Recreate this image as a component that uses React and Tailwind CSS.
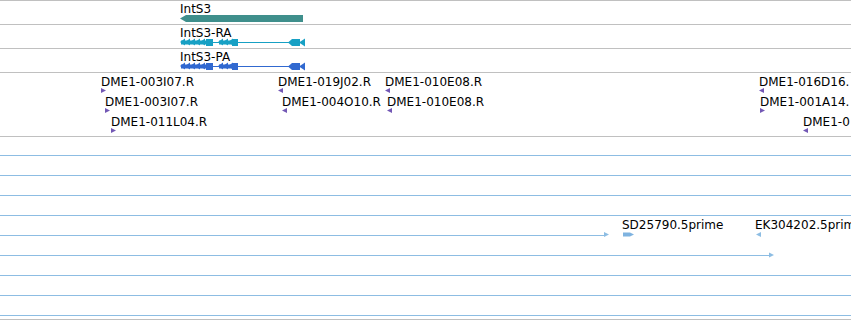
const TEAL = "#3f8f8c";
const CYAN = "#17a0c4";
const BLUE = "#3169d0";
const PURPLE = "#7358b5";
const EST = "#8dbde3";

function Label({ x, y, children }) {
  return (
    <div className="absolute whitespace-nowrap" style={{ left: x, top: y }}>
      {children}
    </div>
  );
}

// transcript glyph in track-local coordinates, centre line at y=17
function Transcript({ color }) {
  const tri = (x) => `${x},17 ${x + 5},13.5 ${x + 5},20.5`;
  return (
    <svg className="absolute left-0 top-0" width="851" height="23">
      <line x1="212" y1="17.5" x2="290" y2="17.5" stroke={color} strokeWidth="1" />
      <rect x="181" y="15.5" width="32" height="4" fill={color} />
      {[180, 185, 190, 195, 200].map((x) => (
        <polygon key={x} points={tri(x)} fill={color} />
      ))}
      <rect x="206" y="14" width="7" height="7" fill={color} />
      <rect x="219" y="15.5" width="19" height="4" fill={color} />
      {[218, 223, 228].map((x) => (
        <polygon key={x} points={tri(x)} fill={color} />
      ))}
      <rect x="232" y="14" width="6" height="7" fill={color} />
      <polygon points="288,17.5 292,14 300,14 300,21 292,21" fill={color} />
      <polygon points="299,17.5 305,13.5 305,21.5" fill={color} />
    </svg>
  );
}

const probes = [
  { x: 101, row: 0, name: "DME1-003I07.R", dir: "R" },
  { x: 278, row: 0, name: "DME1-019J02.R", dir: "L" },
  { x: 385, row: 0, name: "DME1-010E08.R", dir: "L" },
  { x: 759, row: 0, name: "DME1-016D16.", dir: "L" },
  { x: 105, row: 1, name: "DME1-003I07.R", dir: "R" },
  { x: 282, row: 1, name: "DME1-004O10.R", dir: "L" },
  { x: 387, row: 1, name: "DME1-010E08.R", dir: "L" },
  { x: 760, row: 1, name: "DME1-001A14.", dir: "R" },
  { x: 111, row: 2, name: "DME1-011L04.R", dir: "R" },
  { x: 803, row: 2, name: "DME1-0", dir: "L" },
];

function ProbeRow({ row }) {
  const items = probes.filter((p) => p.row === row);
  return (
    <div className="relative h-[20px]">
      {items.map((p, i) => (
        <Label key={i} x={p.x} y={2}>
          {p.name}
        </Label>
      ))}
      <svg className="absolute left-0 top-0 overflow-visible" width="851" height="20">
        {items.map((p, i) => {
          const pts =
            p.dir === "R"
              ? `${p.x},15 ${p.x + 5},17.5 ${p.x},20`
              : `${p.x + 5},15 ${p.x},17.5 ${p.x + 5},20`;
          return <polygon key={i} points={pts} fill={PURPLE} />;
        })}
      </svg>
    </div>
  );
}

function EstRow({ first, children, full = true }) {
  return (
    <div
      className={`relative ${first ? "h-[19px]" : "h-[20px]"} ${
        full ? "border-b border-[#8dbde3]" : ""
      }`}
    >
      {children}
    </div>
  );
}

function EstTrack() {
  return (
    <div className="flex flex-col h-[184px] border-y border-[#c0c0c0]">
      <EstRow first />
      <EstRow />
      <EstRow />
      <EstRow />
      <EstRow full={false}>
        <div className="absolute left-0 bottom-0 h-px w-[605px] bg-[#8dbde3]" />
        <Label x={622} y={2}>SD25790.5prime</Label>
        <Label x={755} y={2}>EK304202.5prime</Label>
        <svg className="absolute left-0 top-0 overflow-visible" width="851" height="20">
          <polygon points="604,16 609,18.5 604,21" fill={EST} />
          <polygon points="623,16.5 630,16.5 634,18.5 630,20.5 623,20.5" fill="#7fb3e0" />
          <polygon points="756,18.5 761,16 761,21" fill={EST} />
        </svg>
      </EstRow>
      <EstRow full={false}>
        <div className="absolute left-0 bottom-0 h-px w-[770px] bg-[#8dbde3]" />
        <svg className="absolute left-0 top-0 overflow-visible" width="851" height="20">
          <polygon points="769,16.5 774,19 769,21.5" fill={EST} />
        </svg>
      </EstRow>
      <EstRow />
      <EstRow />
      <EstRow />
    </div>
  );
}

export default function App() {
  return (
    <div className="flex flex-col w-[851px] h-[320px] overflow-hidden bg-white text-black font-['DejaVu_Sans',sans-serif] text-[12px] leading-[14px]">
      <div className="relative h-[24px] border-t border-[#c0c0c0]">
        <Label x={180} y={1}>IntS3</Label>
        <svg className="absolute left-0 top-0" width="851" height="23">
          <polygon points="180,17.5 186,14 303,14 303,21 186,21" fill={TEAL} />
        </svg>
      </div>
      <div className="relative h-[24px] border-t border-[#c0c0c0]">
        <Label x={180} y={1}>IntS3-RA</Label>
        <Transcript color={CYAN} />
      </div>
      <div className="relative h-[24px] border-t border-[#c0c0c0]">
        <Label x={180} y={1}>IntS3-PA</Label>
        <Transcript color={BLUE} />
      </div>
      <div className="flex flex-col h-[64px] border-t border-[#c0c0c0] pt-0">
        <ProbeRow row={0} />
        <ProbeRow row={1} />
        <ProbeRow row={2} />
      </div>
      <EstTrack />
    </div>
  );
}
